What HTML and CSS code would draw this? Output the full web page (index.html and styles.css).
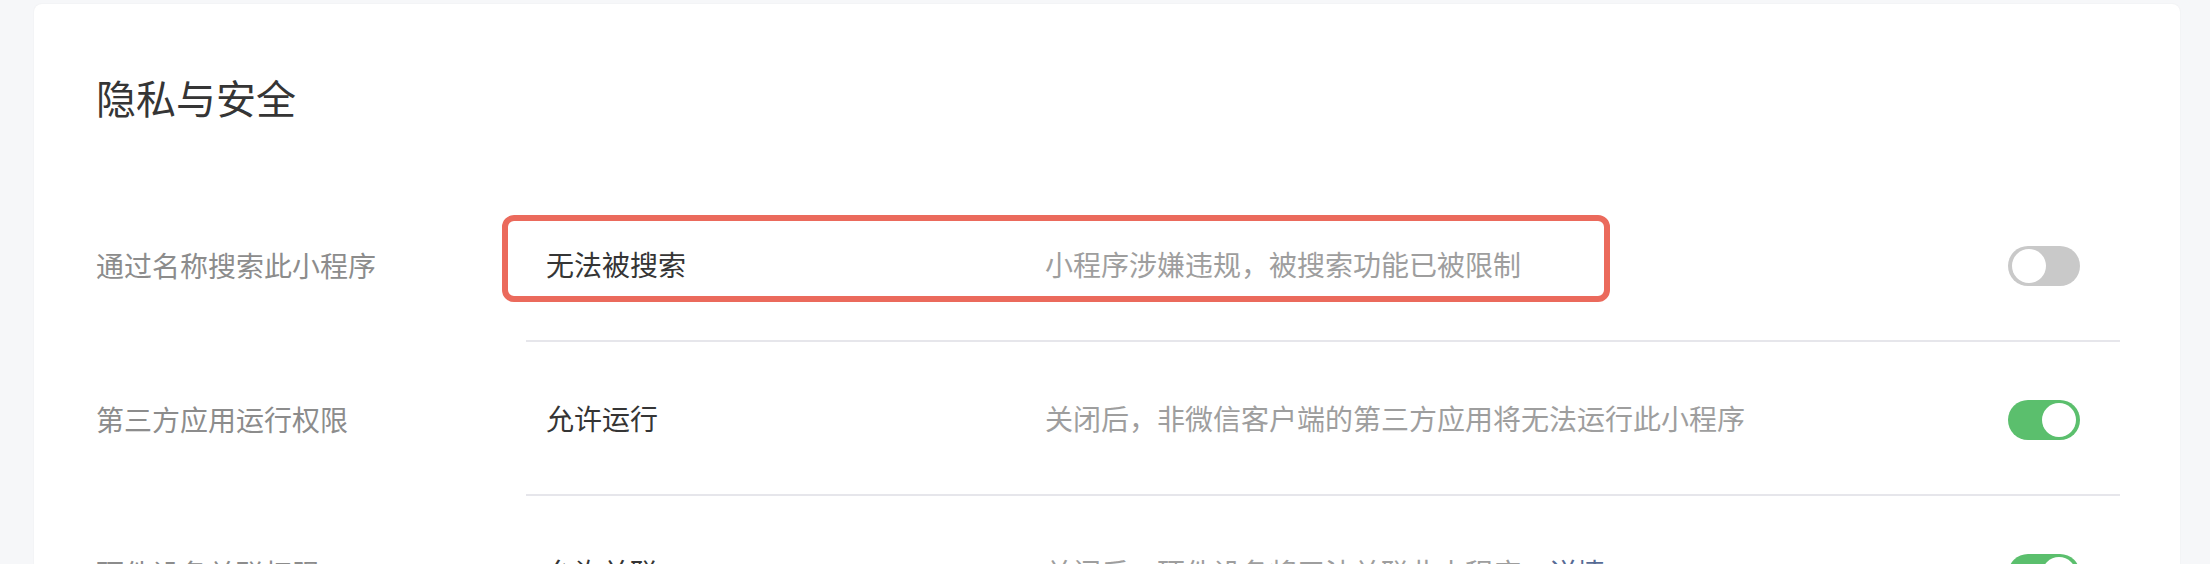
FILE: index.html
```html
<!DOCTYPE html>

<html lang="zh-CN">
    <head>
        <meta charset="utf-8" />
        <title>隐私与安全</title>

        <link rel="stylesheet" href="styles.css">
    </head>
    <body>
        <div id="page-content">
            <div class="card">
                <h1 class="cardTitle">隐私与安全</h1>

                <!-- name search -->
                <div class="settingRow">
                    <div class="settingLabel">通过名称搜索此小程序</div>
                    <div class="settingBody">
                        <div class="settingValue">无法被搜索</div>
                        <div class="settingDesc">小程序涉嫌违规，被搜索功能已被限制</div>
                        <span class="switch"></span>
                        <div class="markBox"></div>
                    </div>
                </div>

                <!-- third party apps -->
                <div class="settingRow">
                    <div class="settingLabel">第三方应用运行权限</div>
                    <div class="settingBody">
                        <div class="settingValue">允许运行</div>
                        <div class="settingDesc">关闭后，非微信客户端的第三方应用将无法运行此小程序</div>
                        <span class="switch on"></span>
                    </div>
                </div>

                <!-- devices -->
                <div class="settingRow">
                    <div class="settingLabel">硬件设备关联权限</div>
                    <div class="settingBody">
                        <div class="settingValue">允许关联</div>
                        <div class="settingDesc">关闭后，硬件设备将无法关联此小程序。<a class="link" href="#">详情</a></div>
                        <span class="switch on"></span>
                    </div>
                </div>
            </div>
        </div>
    </body>
</html>
```

FILE: styles.css
```css
/* body props */
body {
    background-color:   #F6F7F9;
    font-family:        "Noto Sans CJK SC", "Noto Sans", sans-serif;
    margin:             0;
}
#page-content {
    padding:            4px 30px 0 34px;
    height:             560px;
    overflow:           hidden;
}
.card {
    background-color:   #FFFFFF;
    border-radius:      8px;
    box-shadow:         0 0 2px rgba(0, 0, 0, .06);
    padding:            73px 60px 40px 62px;
}
.cardTitle {
    font-size:          40px;
    line-height:        40px;
    font-weight:        normal;
    color:              #353535;
    margin:             0 0 71px 0;
}

/* rows */
.settingRow {
    display:            flex;
    font-size:          28px;
    line-height:        40px;
}
.settingLabel {
    width:              430px;
    flex:               none;
    display:            flex;
    align-items:        center;
    color:              #8C8C8C;
}
.settingBody {
    position:           relative;
    flex:               1;
    display:            flex;
    align-items:        center;
    height:             152px;
    padding:            0 40px 0 20px;
    border-bottom:      2px solid #E6E6EB;
}
.settingValue {
    width:              499px;
    flex:               none;
    color:              #353535;
}
.settingDesc {
    flex:               1;
    color:              #9E9E9E;
}
.link {
    color:              #576B95;
    text-decoration:    none;
}

/* toggle switch */
.switch {
    position:           relative;
    flex:               none;
    width:              72px;
    height:             40px;
    border-radius:      20px;
    background-color:   #C9C9C9;
    margin-top:         4px;
}
.switch::after {
    content:            "";
    position:           absolute;
    top:                3px;
    left:               4px;
    width:              34px;
    height:             34px;
    border-radius:      50%;
    background-color:   #FFFFFF;
}
.switch.on {
    background-color:   #5BBF6D;
}
.switch.on::after {
    left:               34px;
}

/* red annotation box over the first row */
.markBox {
    position:           absolute;
    left:               -24px;
    top:                27px;
    width:              1096px;
    height:             75px;
    border:             6px solid #EB6A5C;
    border-radius:      12px;
}
```
